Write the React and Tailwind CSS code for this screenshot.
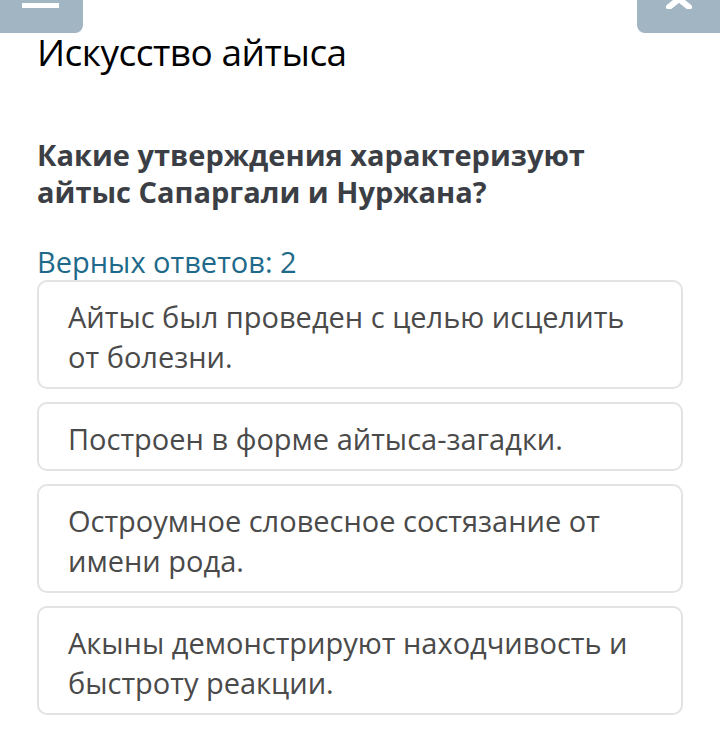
import React from 'react';

const options = [
  'Айтыс был проведен с целью исцелить от болезни.',
  'Построен в форме айтыса-загадки.',
  'Остроумное словесное состязание от имени рода.',
  'Акыны демонстрируют находчивость и быстроту реакции.',
];

export default function App() {
  return (
    <div className="w-[720px] h-[755px] bg-white overflow-hidden font-['Open_Sans',sans-serif]">
      {/* top toolbar buttons, cut off by the screen edge */}
      <div className="flex justify-between h-[33px]">
        <div className="w-[83px] h-[33px] bg-[#a2b5c2] rounded-br-[8px] flex justify-center">
          <div className="w-[37px] h-[5px] bg-white mt-[3px] ml-[-2px]" />
        </div>
        <div className="w-[83px] h-[33px] bg-[#a2b5c2] rounded-bl-[8px] flex justify-center overflow-hidden">
          <svg width="32" height="20" viewBox="0 0 32 20" className="mt-[-11px]">
            <path d="M6 2 L26 18 M26 2 L6 18" stroke="white" strokeWidth="6" strokeLinecap="round" />
          </svg>
        </div>
      </div>

      <div className="px-[37px]">
        <h1 className="text-[37px] leading-[38px] text-black tracking-[-0.5px]">Искусство айтыса</h1>

        <h2 className="mt-[65px] text-[29px] leading-[37px] font-bold text-[#3b3f45]">
          Какие утверждения характеризуют айтыс Сапаргали и Нуржана?
        </h2>

        <p className="mt-[33px] text-[29px] leading-[37px] text-[#1f6a8a]">Верных ответов: 2</p>

        <div className="flex flex-col gap-[13px]">
          {options.map((o) => (
            <div
              key={o}
              className="border-2 border-[#e3e3e3] rounded-[10px] pl-[29px] pr-[20px] pt-[15px] pb-[10px] text-[29px] leading-[40px] text-[#4a4a4a]"
            >
              {o}
            </div>
          ))}
        </div>
      </div>
    </div>
  );
}
